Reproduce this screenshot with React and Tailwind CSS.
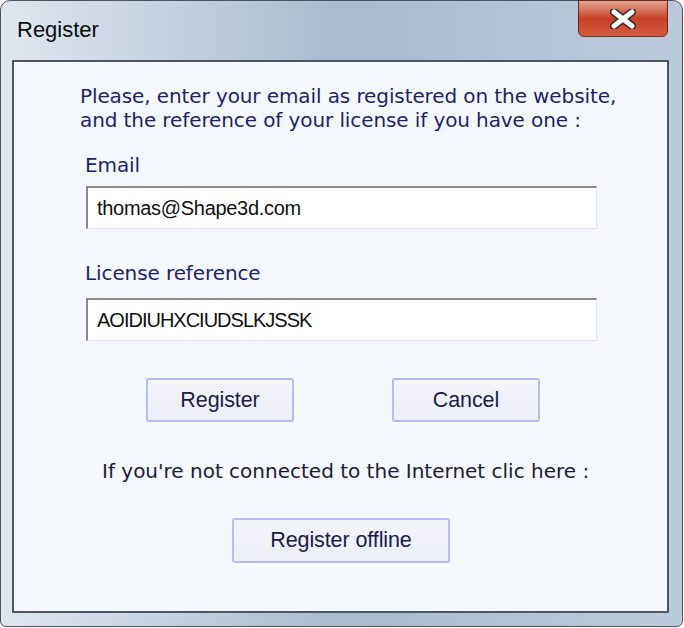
import React from 'react';

const btn =
  "h-[44px] rounded-[3px] border-2 border-[#b4bcf2] bg-gradient-to-b from-[#f3f4fa] to-[#eceef6] text-[21.5px] text-[#1c1c48] tracking-[-0.1px] font-['Liberation_Sans',Arial,sans-serif] flex items-center justify-center";

const field =
  "h-[43px] w-[511px] bg-white border-t-2 border-l-2 border-b border-r border-t-[#8a8a8a] border-l-[#8a8a8a] border-b-[#e2e4e8] border-r-[#e2e4e8] flex items-center pl-[9px] text-[20px] text-[#111] font-['Liberation_Sans',Arial,sans-serif]";

const label = "text-[20px] leading-[24px] text-[#1f1f6e] tracking-[-0.1px]";

export default function App() {
  return (
    <div className="w-[684px] h-[628px] bg-white relative overflow-hidden">
      {/* window frame */}
      <div className="absolute left-0 top-0 w-[683px] h-[627px] rounded-t-[10px] rounded-b-[6px] border border-[#4a5562] bg-gradient-to-r from-[#dfe7ef] via-[#a9bacd] to-[#bccadb] flex flex-col">
        <div className="h-[59px] flex items-start pl-[16px] pt-[12px] text-[22px] text-[#0c0c0c] font-['Liberation_Sans',Arial,sans-serif]">
          Register
        </div>

        {/* close button */}
        <div className="absolute left-[577px] top-[-1px] w-[90px] h-[37px] rounded-b-[6px] border border-[#6b2a22] bg-gradient-to-b from-[#e2a08f] via-[#c8402a] to-[#d65a3f] flex items-center justify-center">
          <svg width="26" height="20" viewBox="0 0 26 20">
            <path d="M4 3 L22 17 M22 3 L4 17" stroke="#3a2a2a" strokeWidth="8" strokeLinecap="round" />
            <path d="M4 3 L22 17 M22 3 L4 17" stroke="#ffffff" strokeWidth="5" strokeLinecap="round" />
          </svg>
        </div>

        {/* client area */}
        <div className="ml-[11px] w-[657px] h-[553px] border-2 border-[#4c5763] bg-[#f4f7fc] flex flex-col font-['DejaVu_Sans',Tahoma,sans-serif]">
          <div className={"pl-[66px] pt-[22px] " + label}>
            <div>Please, enter your email as registered on the website,</div>
            <div>and the reference of your license if you have one :</div>
          </div>

          <div className={"pl-[71px] mt-[21px] " + label}>Email</div>
          <div className="ml-[72px] mt-[9px]">
            <div className={field + " tracking-[-0.3px]"}>thomas@Shape3d.com</div>
          </div>

          <div className={"pl-[71px] mt-[32px] " + label}>License reference</div>
          <div className="ml-[72px] mt-[13px]">
            <div className={field + " tracking-[-1px]"}>AOIDIUHXCIUDSLKJSSK</div>
          </div>

          <div className="flex mt-[37px] ml-[132px] gap-[98px]">
            <div className={btn + " w-[148px]"}>Register</div>
            <div className={btn + " w-[148px]"}>Cancel</div>
          </div>

          <div className="pl-[88px] mt-[37px] text-[20px] leading-[24px] text-[#1c1c34]">
            If you're not connected to the Internet clic here :
          </div>

          <div className="ml-[218px] mt-[35px]">
            <div className={btn + " w-[218px] h-[45px]"}>Register offline</div>
          </div>
        </div>
      </div>
    </div>
  );
}
